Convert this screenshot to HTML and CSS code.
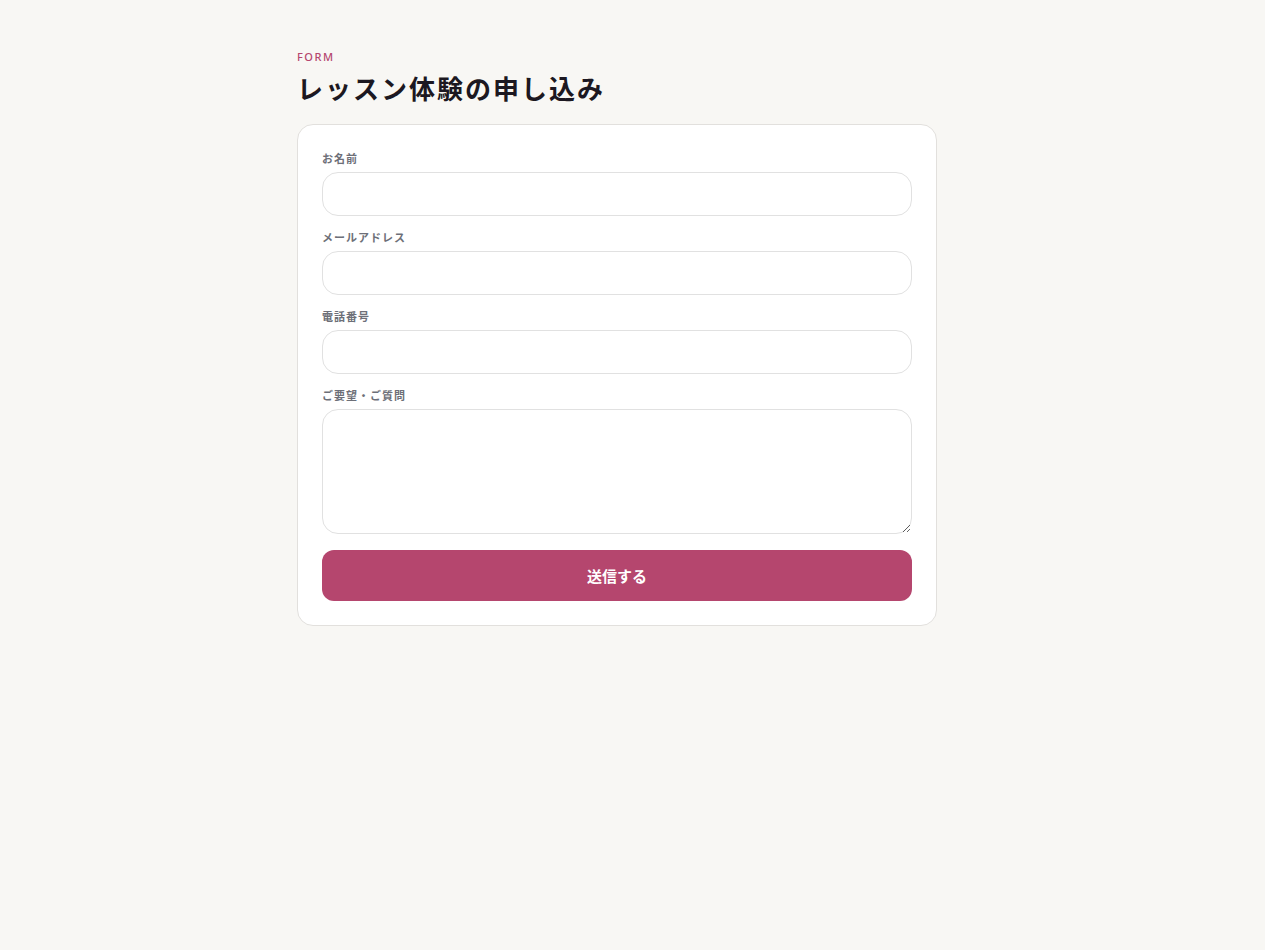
FILE: index.html
```html
<!DOCTYPE html>
<html lang="ja">
<head>
    <meta charset="UTF-8">
    <meta name="viewport" content="width=device-width, initial-scale=1.0">
    <title>レッスン体験の申し込み</title>
    <link rel="stylesheet" href="styles.css">
</head>
<body>

    <div class="page">
        <p class="eyebrow">FORM</p>
        <h1>レッスン体験の申し込み</h1>

        <form class="form-card">
            <div class="field">
                <label for="name">お名前</label>
                <input id="name" type="text">
            </div>
            <div class="field">
                <label for="email">メールアドレス</label>
                <input id="email" type="email">
            </div>
            <div class="field">
                <label for="tel">電話番号</label>
                <input id="tel" type="tel">
            </div>
            <div class="field">
                <label for="message">ご要望・ご質問</label>
                <textarea id="message"></textarea>
            </div>
            <button type="button" class="submit-button">送信する</button>
        </form>
    </div>

</body>
</html>
```

FILE: styles.css
```css
body {
    font-family: "Noto Sans", "Noto Sans CJK JP", sans-serif;
    background-color: #f8f7f4;
    margin: 0;
    padding: 49px 31px 0 0;
    min-height: 100vh;
    box-sizing: border-box;
}
.page {
    width: 640px;
    margin: 0 auto;
}
.eyebrow {
    margin: 0;
    font-size: 11px;
    line-height: 16px;
    letter-spacing: 1.5px;
    font-weight: 500;
    color: #b5466e;
}
h1 {
    margin: 7px 0 18px 0;
    font-size: 26px;
    line-height: 34px;
    font-weight: 700;
    letter-spacing: 2px;
    color: #1c1821;
}
.form-card {
    background-color: #ffffff;
    border: 1px solid #e2e0dd;
    border-radius: 16px;
    padding: 26px 24px 24px;
    display: flex;
    flex-direction: column;
}
.field {
    display: flex;
    flex-direction: column;
    margin-bottom: 14px;
}
.field label {
    font-size: 11px;
    line-height: 16px;
    font-weight: 700;
    letter-spacing: 1px;
    color: #6d6f78;
    margin-bottom: 5px;
}
.field input,
.field textarea {
    box-sizing: border-box;
    width: 100%;
    border: 1px solid #e1e1e1;
    border-radius: 16px;
    background-color: #ffffff;
    font-family: inherit;
    font-size: 14px;
    padding: 10px 14px;
    outline: none;
}
.field input {
    height: 44px;
}
.field textarea {
    height: 125px;
    display: block;
}
.field:last-of-type {
    margin-bottom: 16px;
}
.submit-button {
    height: 51px;
    padding-bottom: 2px;
    border: none;
    border-radius: 12px;
    background-color: #b5466e;
    color: #ffffff;
    font-family: inherit;
    font-size: 15px;
    font-weight: 700;
    cursor: pointer;
}
.submit-button:hover {
    background-color: #a03c60;
}
```
